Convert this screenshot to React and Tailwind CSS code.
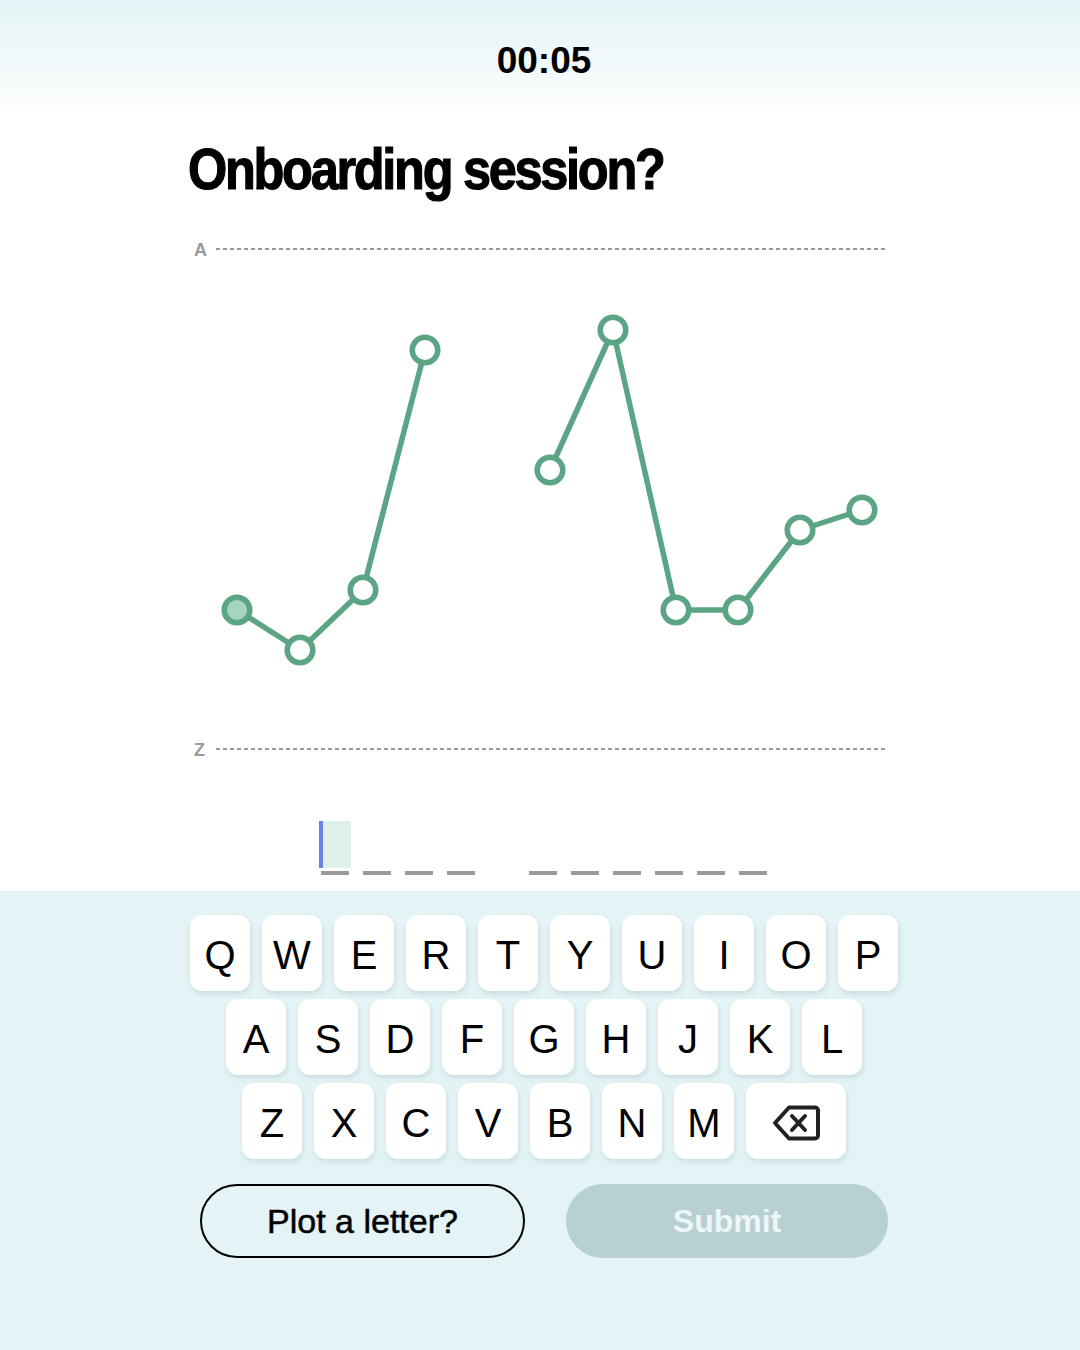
const rows = [
  ["Q", "W", "E", "R", "T", "Y", "U", "I", "O", "P"],
  ["A", "S", "D", "F", "G", "H", "J", "K", "L"],
  ["Z", "X", "C", "V", "B", "N", "M"],
];

const seriesA = [
  [57, 380],
  [120, 420],
  [183, 360],
  [245, 120],
];
const seriesB = [
  [370, 240],
  [433, 100],
  [496, 380],
  [558, 380],
  [620, 300],
  [682, 280],
];

const words = [4, 6];

const Chart = () => {
  const line = (pts) => pts.map((p) => p.join(",")).join(" ");
  return (
    <svg width="720" height="540" viewBox="0 0 720 540" className="block">
      <text
        x="14"
        y="26"
        fill="#9a9a9a"
        fontSize="18"
        fontWeight="700"
        fontFamily="Liberation Sans, Arial, sans-serif"
      >
        A
      </text>
      <line x1="36" y1="19" x2="705" y2="19" stroke="#9a9a9a" strokeWidth="2" strokeDasharray="4 3" />
      <text
        x="14"
        y="526"
        fill="#9a9a9a"
        fontSize="18"
        fontWeight="700"
        fontFamily="Liberation Sans, Arial, sans-serif"
      >
        Z
      </text>
      <line x1="36" y1="519" x2="705" y2="519" stroke="#9a9a9a" strokeWidth="2" strokeDasharray="4 3" />

      <polyline points={line(seriesA)} fill="none" stroke="#5ba584" strokeWidth="5.5" strokeLinejoin="round" />
      <polyline points={line(seriesB)} fill="none" stroke="#5ba584" strokeWidth="5.5" strokeLinejoin="round" />

      {[...seriesA, ...seriesB].map(([x, y], i) => (
        <circle
          key={i}
          cx={x}
          cy={y}
          r="12.8"
          fill={i === 0 ? "#a6d4c3" : "#ffffff"}
          stroke="#5ba584"
          strokeWidth="5.5"
        />
      ))}
    </svg>
  );
};

const BackspaceIcon = () => (
  <svg width="48" height="36" viewBox="0 0 48 36" fill="none">
    <path
      d="M17 2.5 H43 a3 3 0 0 1 3 3 V30.5 a3 3 0 0 1 -3 3 H17 L3 18 Z"
      stroke="#222"
      strokeWidth="4"
      strokeLinejoin="round"
    />
    <path d="M20 11 L33 25 M33 11 L20 25" stroke="#222" strokeWidth="4" strokeLinecap="round" />
  </svg>
);

const Key = ({ children, wide }) => (
  <button
    className={`${wide ? "w-[100px]" : "w-[60px]"} h-[76px] pt-[3px] bg-white rounded-[12px] shadow-[1px_3px_5px_rgba(60,100,110,0.15)] flex items-center justify-center text-[40px] text-black font-['Liberation_Sans',Arial,sans-serif]`}
  >
    {children}
  </button>
);

export default function App() {
  return (
    <div className="w-[1080px] h-[1350px] flex flex-col bg-white font-['Liberation_Sans',Arial,sans-serif]">
      {/* Timer */}
      <div className="h-[120px] shrink-0 flex items-center justify-center bg-gradient-to-b from-[#e3f3f6] via-[#f7fbfc] via-70% to-white">
        <span className="text-[37px] leading-none font-bold text-black pl-[8px]">00:05</span>
      </div>

      {/* Question */}
      <h1 className="mt-[20px] ml-[188px] h-[58px]">
        <span className="inline-block origin-left scale-x-[0.87] whitespace-nowrap text-[58px] leading-[58px] font-bold text-black tracking-[-0.045em] [-webkit-text-stroke:1.2px_#000]">
          Onboarding session?
        </span>
      </h1>

      {/* Plot */}
      <div className="mt-[32px] ml-[180px]">
        <Chart />
      </div>

      {/* Answer slots */}
      <div className="mt-[51px] ml-[321px] flex gap-[54px]">
        {words.map((n, w) => (
          <div key={w} className="flex gap-[14px]">
            {Array.from({ length: n }).map((_, i) => {
              const active = w === 0 && i === 0;
              return (
                <div key={i} className="w-[28px] flex flex-col">
                  <div
                    className={
                      active
                        ? "h-[47px] -mx-[2px] bg-[#dff0ea] border-l-4 border-[#6b80e8]"
                        : "h-[47px]"
                    }
                  />
                  <div className="h-[4px] mt-[3px] bg-[#9a9a9a]" />
                </div>
              );
            })}
          </div>
        ))}
      </div>

      {/* Keyboard */}
      <div className="mt-[16px] flex-1 bg-[#e3f3f6] pt-[24px] pl-[8px] flex flex-col items-center">
        <div className="flex flex-col gap-[8px] items-center">
          <div className="flex gap-[12px]">
            {rows[0].map((k) => (
              <Key key={k}>{k}</Key>
            ))}
          </div>
          <div className="flex gap-[12px]">
            {rows[1].map((k) => (
              <Key key={k}>{k}</Key>
            ))}
          </div>
          <div className="flex gap-[12px]">
            {rows[2].map((k) => (
              <Key key={k}>{k}</Key>
            ))}
            <Key wide>
              <BackspaceIcon />
            </Key>
          </div>
        </div>

        <div className="mt-[25px] flex gap-[41px]">
          <button className="w-[325px] h-[74px] rounded-full border-2 border-black text-[34px] text-black [-webkit-text-stroke:0.5px_#000]">
            Plot a letter?
          </button>
          <button className="w-[322px] h-[74px] rounded-full bg-[#b6d0d3] text-[32px] font-bold text-[#eef6f7]">
            Submit
          </button>
        </div>
      </div>
    </div>
  );
}
